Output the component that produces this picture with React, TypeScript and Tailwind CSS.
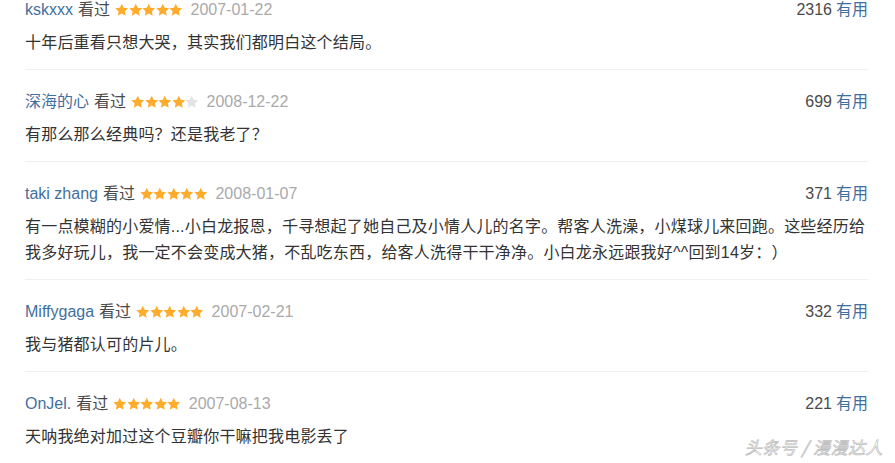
import React from "react";

type Review = {
  user: string;
  stars: number;
  date: string;
  votes: string;
  lines: string[];
};

const reviews: Review[] = [
  { user: "kskxxx", stars: 5, date: "2007-01-22", votes: "2316", lines: ["十年后重看只想大哭，其实我们都明白这个结局。"] },
  { user: "深海的心", stars: 4, date: "2008-12-22", votes: "699", lines: ["有那么那么经典吗？还是我老了？"] },
  {
    user: "taki zhang",
    stars: 5,
    date: "2008-01-07",
    votes: "371",
    lines: [
      "有一点模糊的小爱情...小白龙报恩，千寻想起了她自己及小情人儿的名字。帮客人洗澡，小煤球儿来回跑。这些经历给",
      "我多好玩儿，我一定不会变成大猪，不乱吃东西，给客人洗得干干净净。小白龙永远跟我好^^回到14岁：）",
    ],
  },
  { user: "Miffygaga", stars: 5, date: "2007-02-21", votes: "332", lines: ["我与猪都认可的片儿。"] },
  { user: "OnJel.", stars: 5, date: "2007-08-13", votes: "221", lines: ["天呐我绝对加过这个豆瓣你干嘛把我电影丢了"] },
];

function Star({ on }: { on: boolean }) {
  return (
    <svg width="13.5" height="14" viewBox="0 0 24 24" className="shrink-0">
      <path
        d="M12 0.8l3.4 7.3 8 .9-5.9 5.5 1.6 7.9L12 18.4l-7.1 4 1.6-7.9L.6 9l8-.9z"
        fill={on ? "#ffac2d" : "#e3e3e3"}
      />
    </svg>
  );
}

export default function App() {
  return (
    <div
      className="relative w-[895px] h-[463px] overflow-hidden bg-white pl-[25px] pr-[27px] [text-spacing-trim:space-all]"
      style={{ fontFamily: '"Liberation Sans", Arial, "Noto Sans CJK SC", sans-serif' }}
    >
      {reviews.map((r, i) => (
        <div
          key={i}
          className={`${i === 0 ? "pt-0" : "pt-[22px]"} ${i < reviews.length - 1 ? "pb-[13px] border-b border-[#f0f0f0]" : ""}`}
        >
          <div className="flex items-center justify-between h-[20px] text-[16px] leading-[20px]">
            <div className="flex items-center">
              <span className="text-[#3f6fa0]">{r.user}</span>
              <span className="ml-[5px] text-[#4a4a4a]">看过</span>
              <span className="ml-[5px] flex items-center">
                {[0, 1, 2, 3, 4].map((s) => (
                  <Star key={s} on={s < r.stars} />
                ))}
              </span>
              <span className="ml-[8px] text-[#aaaaaa]">{r.date}</span>
            </div>
            <div className="flex items-center">
              <span className="text-[#4a4a4a]">{r.votes}</span>
              <span className="ml-[4px] text-[#3f6fa0]">有用</span>
            </div>
          </div>
          <div className="mt-[10px] text-[16px] leading-[26px] text-[#333333] tracking-[0.2px]">
            {r.lines.map((l, j) => (
              <div key={j} className="whitespace-nowrap">{l}</div>
            ))}
          </div>
        </div>
      ))}
      <div
        className="absolute right-[12px] bottom-[6px] text-[17px] italic text-white [-webkit-text-stroke:0.7px_#bdbdbd] leading-[20px] tracking-[0.5px]"
        style={{ fontFamily: '"Noto Sans CJK SC", sans-serif' }}
      >
        头条号 / 漫漫达人
      </div>
    </div>
  );
}
